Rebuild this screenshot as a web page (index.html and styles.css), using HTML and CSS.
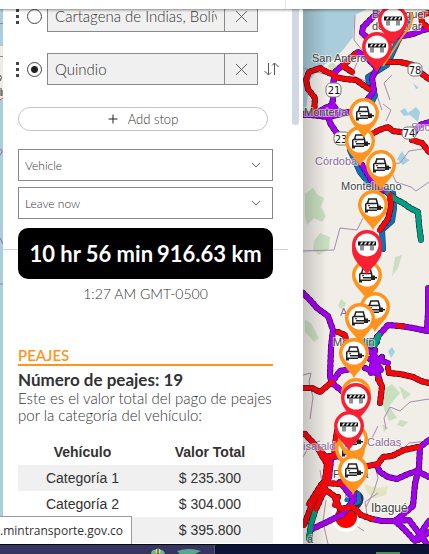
FILE: index.html
```html
<!DOCTYPE html>
<html lang="es">
<head>
<meta charset="utf-8">
<meta name="viewport" content="width=device-width, initial-scale=1">
<title>Peajes</title>
<link rel="stylesheet" href="styles.css">
</head>
<body>
<header class="topbar"><span class="topbar-divider"></span></header>
<main class="app">
  <svg class="map-edge" viewBox="0 0 3 544" preserveAspectRatio="xMinYMin slice" aria-hidden="true">
    <rect width="3" height="544" fill="#a9cddb"/>
    <path d="M0 46h3v54H0z" fill="#efece5"/>
    <path d="M0 23.500h3M0 56.500h3M0 284h3" stroke="#9a7fae"/>
    <path d="M0 75q3 2 0 6M1 88v8M2 90v6" stroke="#444" fill="none"/>
    <path d="M0 100l3-2" stroke="#e03040"/>
    <path d="M0 149q4 2 0 6M0 238l3 6" stroke="#8a6a9f" fill="none"/>
  </svg>

  <section class="panel" aria-label="Directions">
    <form class="directions">
      <div class="stop">
        <span class="grip" aria-hidden="true"></span>
        <input class="stop-radio" type="radio" name="stop" aria-label="Stop 1">
        <div class="stop-box">
          <input class="stop-input" type="text" value="Cartagena de Indias, Bolívar" aria-label="Origin">
          <button class="clear" type="button" aria-label="Clear origin"><svg viewBox="0 0 14 14"><path d="M1 1l12 12M13 1L1 13"/></svg></button>
        </div>
      </div>
      <div class="stop">
        <span class="grip" aria-hidden="true"></span>
        <input class="stop-radio" type="radio" name="stop" checked aria-label="Stop 2">
        <div class="stop-box">
          <input class="stop-input" type="text" value="Quindio" aria-label="Destination">
          <button class="clear" type="button" aria-label="Clear destination"><svg viewBox="0 0 14 14"><path d="M1 1l12 12M13 1L1 13"/></svg></button>
        </div>
        <button class="swap" type="button" aria-label="Reverse stops"><svg viewBox="0 0 15 14"><path d="M4.500 1v11.500M.5 9l4 4 2.500-2.500M10.500 13V1M8 3.500L10.500 1l4 4"/></svg></button>
      </div>
      <button class="add-stop" type="button"><svg viewBox="0 0 10 10" aria-hidden="true"><path d="M5 .5v9M.5 5h9"/></svg>Add stop</button>
      <select class="picker" aria-label="Travel mode"><option>Vehicle</option></select>
      <select class="picker" aria-label="Departure"><option>Leave now</option></select>
    </form>

    <div class="summary">
      <div class="summary-box"><span>10 hr 56 min</span><span>916.63 km</span></div>
    </div>
    <p class="arrival">1:27 AM GMT-0500</p>

    <section class="tolls">
      <h2>PEAJES</h2>
      <h3>Número de peajes: 19</h3>
      <p>Este es el valor total del pago de peajes por la categoría del vehículo:</p>
      <table>
        <thead><tr><th>Vehículo</th><th>Valor Total</th></tr></thead>
        <tbody>
          <tr><td>Categoría 1</td><td>$ 235.300</td></tr>
          <tr><td>Categoría 2</td><td>$ 304.000</td></tr>
          <tr><td>Categoría 3</td><td>$ 395.800</td></tr>
        </tbody>
      </table>
    </section>
    <span class="scroll-thumb" aria-hidden="true"></span>
  </section>

  <div class="map">
    <svg viewBox="303 0 126 544" preserveAspectRatio="xMinYMin slice" role="img" aria-label="Mapa de la ruta">
      <defs>
        <g id="pin-shape">
          <path d="M0 25C-3 18-15 11-15 0A15 15 0 0 1 15 0C15 11 3 18 0 25z"/>
          <circle r="11.500" fill="#fff"/>
        </g>
        <g id="car-pin">
          <use href="#pin-shape" fill="#ff931e"/>
          <path d="M-5.500-1.500l1.300-4.500h7.400l1.300 4.500M-7-1.500H5" fill="none" stroke="#222" stroke-width="1.500"/>
          <path d="M-8-1.500h1.500v7H-8zM4-1.500h1.500v2.500H4zM-5 .3h2v1h-2zM-4 2H10v1.600H-4zM4 .5h4v4.500H4zM-8 4.500H4V6H-8zM-8 5.500h3v2h-3z" fill="#222"/>
        </g>
        <g id="toll-pin">
          <use href="#pin-shape" fill="#fb1f32"/>
          <path d="M-9-3.500H9V.5H-9z" fill="#111"/>
          <path d="M-6.500-.5l2-2.200M-2.500-.5l2-2.200M1.500-.5l2-2.200M5.500-.5l2-2.200" stroke="#fff" stroke-width="1.300"/>
          <path d="M-6 .5v5M-4 .5v5M4 .5v5M6 .5v5" stroke="#222" stroke-width="1"/>
        </g>
        <g id="purple">
          <path d="M377 13L370 20 363 27 362 33 368 38 379 44 388 43 393 37 402 36 413 34 423 30 429 29"/>
          <path d="M374 65L366 57 358 52 350 58 343 65 335 72 333 85 333 100 328 114 330 123 340 138"/>
          <path d="M303 115L315 114 325 108 333 105 338 112 350 112M303 114L328 117 350 112"/>
          <path d="M378 66L372 78 374 91 363 105"/>
          <path d="M401 132L413 134 420 125 429 122M362 165L373 183 388 193"/>
          <path d="M303 293L310 300 317 308 328 316 333 330 331 347 330 377 332 383 342 391 352 397"/>
          <path d="M332 382L340 371 351 369M377 337L388 325 400 326 413 328 427 331 428 312 428 288"/>
          <path d="M365 348L372 353 378 360 388 363M365 368L378 374 380 382M375 350l-4 23M382 357l-9 10 8 3M370 359l10 9"/>
          <path d="M372 519L382 521 395 521 413 506 415 484 419 467 420 447 429 440"/>
          <path d="M377 466L380 472 388 477 397 479 408 474 417 471 429 477"/>
          <path d="M395 521L404 529 415 541 429 521M395 521l14-1 18 24M418 540l11-8"/>
          <path d="M312 529L325 523 343 514 352 502 354 494M330 456l14 1M331 460l-2 18M340 482l14 18"/>
        </g>
        <g id="red">
          <path d="M429 13L421 15 422 23 429 28M387 62L400 62 413 65 421 73 429 79"/>
          <path d="M355 54L343 66 352 72M335 77L345 79 356 80 369 89"/>
          <path d="M334 75L325 71 320 68 309 72 306 80 308 89 315 98 314 113"/>
          <path d="M372 134L379 130 388 127 393 131 400 132M412 140L422 143 429 152"/>
          <path d="M374 185l7 4M390 195L391 206 388 219 380 230M338 332L345 335 346 341M398 326h5"/>
          <path d="M303 388L312 388 320 392 326 387 332 382M388 368L389 373 400 374 413 377 421 381 429 383"/>
          <path d="M378 379L382 386 381 395 380 403M305 434L317 447 327 464 325 481 318 493 311 507 304 525"/>
          <path d="M337 431L335 445 334 457 322 456M368 466L378 464 383 457 392 456 404 450 418 447"/>
          <path d="M320 450L330 464 328 479 323 488 334 496 340 509 353 507 361 515 372 519M323 483l19 1"/>
          <path d="M321 485l-12 19M325 489l-9 20M338 497l-3 8"/>
        </g>
        <g id="green">
          <path d="M388 193L395 199 403 203 410 208 418 212 419 225 421 240M365 342L375 341 379 335 375 345M315 511L311 524 309 539"/>
        </g>
        <linearGradient id="edge-shade"><stop stop-color="#000" stop-opacity=".18"/><stop offset="1" stop-color="#000" stop-opacity="0"/></linearGradient>
      </defs>

      <rect x="303" width="126" height="544" fill="#f1eee8"/>
      <path d="M303 0h64v9l-12 6-2 22-10 13-10 10-13 7-10 13-4 30-3 3z" fill="#a9cddb"/>
      <g fill="#c9dfc0">
        <path d="M327 66l6-4 4 5-5 4zM305 194l8-6 5 7 6 3-3 9 5 9-4 6-8-4-7 7-2-9zM314 241l6-8 10 4-1 12-10 6-6-5zM395 257l7-2-4 13-6 8zM341 299l5 4-3 8-5-5zM305 320l6 3 8 15-5 4-9-10zM380 392l12-8 8 9-11 13 8 12-8 3-5-12zM399 386l12 8-7 6zM400 420l8 2-5 5-6-2zM382 424l6 4-4 4z"/>
        <path d="M364 484l14 4 10-2-2 9-11 3-8-5z" fill="#e2e5bf"/>
      </g>
      <g fill="#a5d0e3"><path d="M400 111l5-3 3 5 8-6 4 5-2 10-8-7-6 1zM397 159l5-8 4 7 4 2-7 5zM388 351l4-4 3 5-4 6zM329 28l5-2-2 3zM413 83l6 5-3 1z"/></g>
      <g class="boundary">
        <path d="M355 15l-1 25 8 10M362 50l-10 25 15 7 9 11 6 17M303 68l28 8M390 100l-6-17 8-8M383 104l8 6-5 11M429 148l-20 3-9 12-12 1 8 18 15 5 5 4 13-9"/>
        <path d="M363 218l-6 12-17-2-6 22-31 1M303 375l8-2-2 9 4 15-3 22M429 399l-19 3-10 9-10-4-6 11 2 11M303 457l8-14 9-2M378 426l-6 12M375 466l3 12-4 13-8 16M429 441l-20 2-5 5-12-4M320 470l3 18M326 500l-3 22 5 22M345 490l4 31 15 10M378 493l-13 9 2 12"/>
      </g>
      <g class="casing"><path d="M411 17L398 41 387 65 368 77 370 88 375 95 370 106M350 150L360 172 373 188 393 193 394 208 392 221 382 230 383 249M368 348l9-6M356 493q8 4 2 12"/></g>
      <g class="blue"><path d="M411 17L398 41 387 65 368 77 370 88 375 95 370 106M350 150L360 172 373 188 393 193 394 208 392 221 382 230 383 249M368 348l9-6M347 500l6 4 6-3-1-7"/></g>
      <circle cx="346" cy="517" r="15" fill="#fff"/><circle cx="346" cy="517" r="11" fill="#f00"/>
      <g class="casing"><use href="#purple"/><use href="#green"/><use href="#red"/></g>
      <g class="beads"><use href="#purple"/><use href="#green"/><use href="#red"/></g>
      <g class="road"><use href="#purple" stroke="#a300ee"/><use href="#green" stroke="#00a183"/><use href="#red" stroke="#f5080c"/></g>
      <g class="labels">
        <text x="372" y="18">Barranquer</text><text x="372" y="30">de Bolívar</text>
        <text x="312" y="62">San Antero</text><text x="304" y="116">Montería</text>
        <text x="341" y="190">Montelíbano</text><text x="333" y="346">Medellín</text>
        <text x="333" y="478">Pereira</text><text x="371" y="512" class="city">Ibagué</text><text x="307" y="543">á</text>
        <text x="315" y="165" class="region">Córdoba</text><text x="411" y="131" class="region">Sucre</text>
        <text x="340" y="316" class="region">Antioquia</text><text x="303" y="450" class="region">isaralda</text><text x="367" y="446" class="region">Caldas</text>
      </g>
      <g class="shields">
        <rect x="326" y="83" width="15" height="14" rx="5"/><rect x="408" y="63" width="14" height="13" rx="5"/><rect x="402" y="127" width="14" height="12" rx="5"/><rect x="334" y="132" width="16" height="13" rx="5"/>
        <text x="334" y="94">21</text><text x="415" y="74">78</text><text x="409" y="137">74</text><text x="341" y="143">23</text>
      </g>
      <path d="M411 12q4 10-7 22l-21 32" fill="none" stroke="#ff931e" stroke-width="2"/>
      <g>
        <use href="#toll-pin" x="393" y="20"/><use href="#toll-pin" x="377" y="47"/>
        <use href="#car-pin" x="360" y="141"/><use href="#car-pin" x="364" y="113"/>
        <use href="#car-pin" x="381" y="165"/><use href="#car-pin" x="373" y="205"/>
        <use href="#car-pin" x="367" y="275"/><use href="#toll-pin" x="367" y="250"/><use href="#toll-pin" x="367" y="245"/>
        <use href="#car-pin" x="375" y="307"/><use href="#car-pin" x="360" y="318"/>
        <use href="#car-pin" x="356" y="393"/><use href="#car-pin" x="354" y="353"/>
        <use href="#car-pin" x="350" y="449"/><use href="#car-pin" x="353" y="439"/>
        <use href="#toll-pin" x="356" y="398"/><use href="#toll-pin" x="349" y="426"/>
        <use href="#car-pin" x="353" y="470"/>
      </g>
      <rect x="303" width="24" height="544" fill="url(#edge-shade)"/>
    </svg>
  </div>
  <div class="status">.mintransporte.gov.co</div>
</main>
<footer class="taskbar">
  <div class="taskbar-window">
    <svg viewBox="0 0 54 8" aria-hidden="true"><path d="M1 8q1-5 4-4 3-3 6 0 3 0 4 4z" fill="#70b88c"/><circle cx="8" cy="5" r="2.500" fill="#e8d889"/><path d="M8 2v6" stroke="#222"/><path d="M27 5q12-4 24 0l-6 3H30z" fill="#5ba88f"/></svg>
  </div>
  <span class="taskbar-app"></span>
</footer>
</body>
</html>
```
FILE: styles.css
```css
* { box-sizing: border-box; }

body {
  margin: 0;
  height: 100vh;
  display: flex;
  flex-direction: column;
  overflow: hidden;
  background: #fff;
  color: #323232;
  font-family: Lato, "Open Sans", sans-serif;
  font-weight: 300;
}

button, input, select { font: inherit; color: inherit; border-radius: 0; }
button { padding: 0; cursor: pointer; }
svg { display: block; }

/* Bar above the panel and the map */
.topbar {
  position: absolute;
  inset: 0 0 auto;
  height: 9px;
  z-index: 2;
  background: #fff;
  box-shadow: 0 1px 3px rgba(0, 0, 0, .45);
  display: flex;
  padding-left: 285px;
}
.topbar-divider { border-left: 1px solid #e4e4e4; }

.app { position: relative; flex: 1; min-height: 0; display: flex; }
.map-edge { width: 3px; height: 100%; flex: none; }

.panel {
  position: relative;
  flex: 0 0 300px;
  overflow: hidden;
  background: #fff;
}
.scroll-thumb {
  position: absolute;
  top: 9px;
  right: 4px;
  width: 7px;
  height: 116px;
  border-radius: 0 0 3px 3px;
  background: #d0d9e3;
}

/* Stops */
.directions { padding: 0 24px 0 13px; display: flex; flex-direction: column; }
.stop { display: flex; align-items: center; height: 32px; margin-bottom: 21px; }
.grip {
  width: 3px;
  height: 15px;
  margin-right: 8px;
  flex: none;
  background: linear-gradient(#444 3px, transparent 3px 6px, #444 6px 9px, transparent 9px 12px, #444 12px);
}
.stop-radio {
  appearance: none;
  flex: none;
  width: 15px;
  height: 15px;
  margin: 0 5px 0 0;
  border: 1px solid #444;
  border-radius: 50%;
  background: #fff;
}
.stop-radio:checked { background: radial-gradient(circle, #222 3px, #fff 4px); }
.stop-box {
  flex: 0 0 211px;
  min-width: 0;
  height: 32px;
  display: flex;
  border: 1px solid #898989;
  background: #f0f0f0;
}
.stop-input {
  flex: 1;
  width: 0;
  min-width: 0;
  margin: 0 7px;
  padding: 0;
  border: 0;
  background: transparent;
  font-size: 15px;
}
.clear {
  flex: 0 0 33px;
  display: grid;
  place-items: center;
  border: 0;
  border-left: 1px solid #898989;
  background: transparent;
}
.clear svg { width: 13px; height: 13px; }
.swap { margin-left: 6px; border: 0; background: none; }
.swap svg { width: 15px; height: 14px; }
.clear path, .swap path { fill: none; stroke: #555; }

.add-stop {
  height: 24px;
  margin: 1px 11px 18px 2px;
  display: flex;
  align-items: center;
  justify-content: center;
  gap: 10px;
  border: 1px solid #c4c4c4;
  border-radius: 12px;
  background: #fff;
  font-size: 13px;
}
.add-stop svg { width: 10px; height: 10px; }
.add-stop path { stroke: #222; }

.picker {
  appearance: none;
  height: 32px;
  margin: 0 6px 6px 2px;
  padding: 0 6px;
  border: 1px solid #898989;
  font-size: 12px;
  background:
    url("data:image/svg+xml,%3Csvg xmlns='http://www.w3.org/2000/svg' width='10' height='6'%3E%3Cpath d='M1 1l4 4 4-4' fill='none' stroke='%23666'/%3E%3C/svg%3E")
    no-repeat right 11px center #fff;
}

/* Route summary: the rule runs behind the black box */
.summary {
  margin: 3px 15px 0 0;
  padding: 0 15px;
  background: linear-gradient(#d0d0d0, #d0d0d0) 0 21px / 100% 1px no-repeat;
}
.summary-box {
  height: 51px;
  display: flex;
  align-items: center;
  justify-content: center;
  gap: 4px;
  border-radius: 10px;
  background: #000;
  color: #fff;
  font-size: 22px;
  font-weight: 700;
  white-space: nowrap;
}
.arrival { margin: 5px 30px 0 15px; font-size: 14px; line-height: 20px; text-align: center; }

/* Tolls */
.tolls { margin: 42px 24px 0 15px; }
.tolls h2 {
  margin: 0 6px 4px 0;
  border-bottom: 2px solid #ff931e;
  color: #ff931e;
  font-size: 15px;
  line-height: 18px;
  font-weight: 600;
}
.tolls h3 { margin: 0; font-size: 17px; line-height: 20px; font-weight: 700; }
.tolls p { margin: 0 0 15px; font-size: 15px; line-height: 17px; }
.tolls table {
  width: 255px;
  border-collapse: collapse;
  table-layout: fixed;
  font: 14px/26px "Liberation Sans", Arial, sans-serif;
  text-align: center;
}
.tolls th, .tolls td { padding: 0; }
.tolls th:first-child, .tolls td:first-child { width: 129px; }
.tolls tbody tr:nth-child(odd) { background: #f0f0f0; }

/* Map */
.map { flex: 1; min-width: 0; overflow: hidden; }
.map svg { width: 100%; height: 100%; }
.boundary { fill: none; stroke: #a78bae; stroke-width: 1; }
.casing, .beads, .road, .blue { fill: none; stroke-linecap: round; stroke-linejoin: round; }
.casing { stroke: #3a2c48; stroke-width: 6; }
.beads { stroke: #111; stroke-width: 6; stroke-dasharray: 0 5; }
.road { stroke-width: 5; }
.blue { stroke: #0b72bd; stroke-width: 5; }
.labels {
  font: 11px "Liberation Sans", Arial, sans-serif;
  fill: #444;
  stroke: #fff;
  stroke-width: 2px;
  stroke-opacity: .6;
  paint-order: stroke;
}
.labels .region { fill: #8a6a9f; }
.labels .city { font-size: 12px; }
.shields rect { fill: #fff; stroke: #777; }
.shields text { font: 10px "DejaVu Sans", sans-serif; fill: #111; text-anchor: middle; }

/* Link address shown over the lower left corner */
.status {
  position: absolute;
  left: 0;
  bottom: 0;
  height: 28px;
  padding-right: 8px;
  border: 1px solid #999;
  border-width: 1px 1px 0 0;
  background: #fff;
  font: 12px/28px "Open Sans", "Noto Sans", sans-serif;
}

.taskbar { flex: 0 0 10px; display: flex; background: #0b1434; border-top: 1px solid #05070f; }
.taskbar-window { flex: 0 0 215px; padding: 1px 0 0 150px; background: #35355f; border-right: 1px solid #55557c; }
.taskbar-window svg { width: 54px; height: 8px; }
.taskbar-app { width: 24px; height: 2px; margin: 7px 0 0 161px; background: #4d8f4b; }
```
